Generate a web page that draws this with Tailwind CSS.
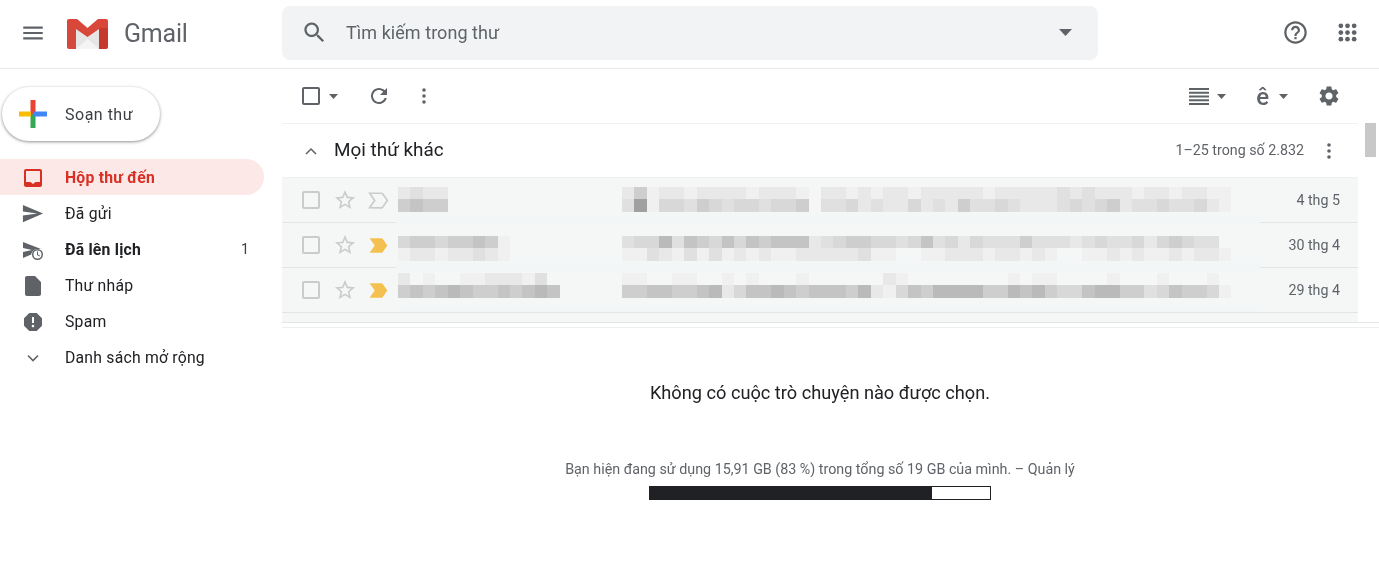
<!DOCTYPE html>
<html lang="vi">
<head>
  <meta charset="UTF-8" />
  <meta name="viewport" content="width=device-width, initial-scale=1.0" />
  <title>Gmail</title>
  <script src="https://cdn.jsdelivr.net/npm/@tailwindcss/browser@4"></script>
</head>
<body class="bg-white font-['Roboto',sans-serif] text-[#202124]">
<div class="relative w-[1379px] h-[581px] overflow-hidden flex flex-col blur-[0.35px]">

  <!-- header -->
  <header class="h-[69px] shrink-0 flex items-center pb-[4px] border-b border-[#e8eaed]">
    <svg class="ml-[20px] mt-[2px] w-[26px] h-[26px] fill-[#5f6368]" viewBox="0 0 24 24"><path d="M3 18h18v-2H3v2zm0-5h18v-2H3v2zm0-7v2h18V6H3z"/></svg>
    <svg class="ml-[21px] mt-[4px] w-[41px] h-[30px]" viewBox="0 0 41 30">
      <path d="M2 0h37a2 2 0 0 1 2 2v26a2 2 0 0 1-2 2H2a2 2 0 0 1-2-2V2a2 2 0 0 1 2-2z" fill="#e6e6e6"/>
      <path d="M9 30 20.500 20 32 30z" fill="#f4f4f4"/>
      <path d="M10 0h21L20.500 9z" fill="#fff"/>
      <path d="M2 0h8l10.500 9L31 0h8a2 2 0 0 1 2 2v8h-9l-11.500 8L9 10H0V2a2 2 0 0 1 2-2z" fill="#d9463a"/>
      <path d="M0 9h9v21H2a2 2 0 0 1-2-2z" fill="#d4493d"/>
      <path d="M32 9h9v19a2 2 0 0 1-2 2h-7z" fill="#c5392e"/>
    </svg>
    <span class="ml-[16px] mt-[4px] w-[158px] text-[25px] tracking-[-0.2px] text-[#5f6368]">Gmail</span>
    <div class="w-[816px] h-[54px] mt-[2px] rounded-lg bg-[#f1f3f4] flex items-center pb-[2px]">
      <svg class="ml-[19px] w-[27px] h-[27px] fill-[#5f6368]" viewBox="0 0 24 24"><path d="M15.500 14h-.79l-.28-.27C15.410 12.590 16 11.110 16 9.500 16 5.910 13.090 3 9.500 3S3 5.910 3 9.500 5.910 16 9.500 16c1.610 0 3.090-.59 4.230-1.570l.27.28v.79l5 4.990L20.490 19l-4.990-5zm-6 0C7.010 14 5 11.990 5 9.500S7.010 5 9.500 5 14 7.010 14 9.500 11.990 14 9.500 14z"/></svg>
      <span class="ml-[18px] text-[18px] tracking-[0.05px] text-[#5f6368] flex-1">Tìm kiếm trong thư</span>
      <svg class="mr-[26px] w-[13px] h-[7px] fill-[#5f6368]" viewBox="0 0 13 7"><path d="M0 0h13L6.500 7z"/></svg>
    </div>
    <svg class="ml-[184px] w-[27px] h-[27px] fill-[#5f6368]" viewBox="0 0 24 24"><path d="M11 18h2v-2h-2v2zm1-16C6.480 2 2 6.480 2 12s4.480 10 10 10 10-4.480 10-10S17.520 2 12 2zm0 18c-4.410 0-8-3.590-8-8s3.590-8 8-8 8 3.590 8 8-3.590 8-8 8zm0-14c-2.210 0-4 1.790-4 4h2c0-1.100.9-2 2-2s2 .9 2 2c0 2-3 1.750-3 5h2c0-2.250 3-2.500 3-5 0-2.210-1.790-4-4-4z"/></svg>
    <svg class="ml-[29px] w-[19px] h-[19px] fill-[#5f6368]" viewBox="0 0 20 20">
      <circle cx="3" cy="3" r="2.500"/><circle cx="10" cy="3" r="2.500"/><circle cx="17" cy="3" r="2.500"/>
      <circle cx="3" cy="10" r="2.500"/><circle cx="10" cy="10" r="2.500"/><circle cx="17" cy="10" r="2.500"/>
      <circle cx="3" cy="17" r="2.500"/><circle cx="10" cy="17" r="2.500"/><circle cx="17" cy="17" r="2.500"/>
    </svg>
  </header>

  <div class="flex flex-1 min-h-0">
    <!-- sidebar -->
    <aside class="w-[282px] shrink-0 pt-[18px]">
      <button class="ml-[2px] w-[158px] h-[54px] rounded-full bg-white flex items-center shadow-[0_1px_3px_1px_rgba(60,64,67,0.22),0_1px_2px_rgba(60,64,67,0.3)]">
        <svg class="ml-[17px] w-[28px] h-[28px]" viewBox="0 0 28 28">
          <rect x="11.500" y="0" width="5" height="14" fill="#ea4335"/>
          <rect x="11.500" y="14" width="5" height="14" fill="#34a853"/>
          <rect x="0" y="11.500" width="12" height="5" fill="#fbbc04"/>
          <rect x="14" y="11.500" width="14" height="5" fill="#4285f4"/>
        </svg>
        <span class="ml-[18px] pt-[2px] text-[16px] tracking-[0.5px] text-[#3c4043]">Soạn thư</span>
      </button>
      <nav class="mt-[18px] text-[15.750px] tracking-[0.22px] text-[#202124]">
        <a class="w-[264px] h-[36px] pt-[1px] rounded-r-full bg-[#fce8e6] flex items-center font-bold text-[#d93025]">
          <svg class="ml-[21px] w-[24px] h-[24px] fill-[#d93025]" viewBox="0 0 24 24"><path fill-rule="evenodd" d="M5 3h14a2 2 0 0 1 2 2v14a2 2 0 0 1-2 2H5a2 2 0 0 1-2-2V5a2 2 0 0 1 2-2zm0 2v11h4.500l2.500 2 2.500-2H19V5z"/></svg>
          <span class="ml-[20px]">Hộp thư đến</span>
        </a>
        <a class="w-[264px] h-[36px] pt-[1px] flex items-center">
          <svg class="ml-[21px] w-[23px] h-[23px] fill-[#5f6368]" viewBox="0 0 24 24"><path d="M2.010 21L23 12 2.010 3 2 10l15 2-15 2z"/></svg>
          <span class="ml-[21px]">Đã gửi</span>
        </a>
        <a class="w-[264px] h-[36px] pt-[1px] flex items-center font-bold">
          <svg class="ml-[21px] w-[24px] h-[24px] fill-[#5f6368]" viewBox="0 0 24 24">
            <path d="M2 20V14l9-2-9-2V4l18 7h-4a6 6 0 0 0-5.800 5.500z"/>
            <circle cx="16.500" cy="16.500" r="5.500" fill="#5f6368"/>
            <circle cx="16.500" cy="16.500" r="4" fill="#fff"/>
            <path d="M16 13.500h1v3l2.200 1.300-.5.8-2.700-1.600z"/>
          </svg>
          <span class="ml-[20px] flex-1">Đã lên lịch</span>
          <span class="mr-[15px] text-[14.250px] tracking-normal font-normal text-[#3c4043]">1</span>
        </a>
        <a class="w-[264px] h-[36px] pt-[1px] flex items-center">
          <svg class="ml-[21px] w-[24px] h-[24px] fill-[#5f6368]" viewBox="0 0 24 24"><path d="M14 2H6c-1.100 0-1.990.9-1.990 2L4 20c0 1.100.89 2 1.990 2H18c1.100 0 2-.9 2-2V8l-6-6z"/></svg>
          <span class="ml-[20px]">Thư nháp</span>
        </a>
        <a class="w-[264px] h-[36px] pt-[1px] flex items-center">
          <svg class="ml-[21px] w-[24px] h-[24px] fill-[#5f6368]" viewBox="0 0 24 24"><path d="M15.730 3H8.270L3 8.270v7.460L8.270 21h7.460L21 15.730V8.270L15.730 3zM12 17.300c-.72 0-1.300-.58-1.300-1.300 0-.72.58-1.300 1.300-1.300.72 0 1.300.58 1.300 1.300 0 .72-.58 1.300-1.300 1.300zm1-4.300h-2V7h2v6z"/></svg>
          <span class="ml-[20px]">Spam</span>
        </a>
        <a class="w-[264px] h-[36px] pt-[2px] flex items-center">
          <svg class="ml-[26px] w-[14px] h-[9px] stroke-[#5f6368] fill-none" viewBox="0 0 14 9" stroke-width="1.600"><path d="M2 1.500l5 5 5-5"/></svg>
          <span class="ml-[25px]">Danh sách mở rộng</span>
        </a>
      </nav>
    </aside>

    <!-- main -->
    <main class="flex-1 min-w-0 flex flex-col">
      <div class="w-[1076px]">
        <!-- toolbar -->
        <div class="h-[55px] flex items-center border-b border-[#eef0f1]">
          <span class="ml-[20px] w-[18px] h-[18px] rounded-[2px] border-[2px] border-[#5f6368]"></span>
          <svg class="ml-[9px] w-[9px] h-[5px] fill-[#5f6368]" viewBox="0 0 9 5"><path d="M0 0h9L4.500 5z"/></svg>
          <svg class="ml-[29px] w-[24px] h-[24px] fill-[#5f6368]" viewBox="0 0 24 24"><path d="M17.650 6.350C16.200 4.900 14.210 4 12 4c-4.420 0-7.990 3.580-7.990 8s3.570 8 7.990 8c3.730 0 6.840-2.550 7.730-6h-2.080c-.82 2.330-3.040 4-5.650 4-3.310 0-6-2.690-6-6s2.690-6 6-6c1.660 0 3.140.69 4.220 1.780L13 11h7V4l-2.350 2.350z"/></svg>
          <svg class="ml-[31px] w-[4px] h-[16px] fill-[#5f6368]" viewBox="0 0 4 16"><circle cx="2" cy="2" r="1.800"/><circle cx="2" cy="8" r="1.800"/><circle cx="2" cy="14" r="1.800"/></svg>
          <svg class="ml-auto w-[20px] h-[17px] fill-[#5f6368]" viewBox="0 0 20 17"><rect width="20" height="2"/><rect y="3.750" width="20" height="2"/><rect y="7.500" width="20" height="2"/><rect y="11.250" width="20" height="2"/><rect y="15" width="20" height="2"/></svg>
          <svg class="ml-[8px] w-[9px] h-[5px] fill-[#5f6368]" viewBox="0 0 9 5"><path d="M0 0h9L4.500 5z"/></svg>
          <span class="ml-[30px] pt-[2px] text-[24px] leading-none font-medium text-[#5f6368]">ê</span>
          <svg class="ml-[10px] w-[9px] h-[5px] fill-[#5f6368]" viewBox="0 0 9 5"><path d="M0 0h9L4.500 5z"/></svg>
          <svg class="ml-[29px] mr-[17px] w-[24px] h-[24px] fill-[#5f6368]" viewBox="0 0 24 24"><path d="M19.140 12.940c.04-.3.06-.61.06-.94 0-.32-.02-.64-.07-.94l2.030-1.580c.18-.14.23-.41.12-.61l-1.920-3.320c-.12-.22-.37-.29-.59-.22l-2.390.96c-.5-.38-1.030-.7-1.620-.94l-.36-2.540c-.04-.24-.24-.41-.48-.41h-3.840c-.24 0-.43.17-.47.41l-.36 2.540c-.59.24-1.130.57-1.620.94l-2.390-.96c-.22-.08-.47 0-.59.22L2.740 8.870c-.12.21-.08.47.12.61l2.030 1.580c-.05.3-.09.63-.09.94s.02.64.07.94l-2.030 1.580c-.18.14-.23.41-.12.61l1.920 3.320c.12.22.37.29.59.22l2.390-.96c.5.38 1.030.7 1.620.94l.36 2.540c.05.24.24.41.48.41h3.840c.24 0 .44-.17.47-.41l.36-2.540c.59-.24 1.130-.56 1.620-.94l2.390.96c.22.08.47 0 .59-.22l1.920-3.320c.12-.22.07-.47-.12-.61l-2.010-1.580zM12 15.600c-1.980 0-3.600-1.620-3.600-3.600s1.620-3.600 3.600-3.600 3.600 1.620 3.600 3.600-1.620 3.600-3.600 3.600z"/></svg>
        </div>
        <!-- section header -->
        <div class="h-[54px] flex items-center border-b border-[#eef0f1]">
          <svg class="ml-[23px] w-[12px] h-[8px] stroke-[#5f6368] fill-none" viewBox="0 0 12 8" stroke-width="1.500"><path d="M1 7l5-5 5 5"/></svg>
          <span class="ml-[17px] text-[18.900px] text-[#202124] flex-1">Mọi thứ khác</span>
          <span class="text-[14.250px] text-[#5f6368]">1–25 trong số 2.832</span>
          <svg class="ml-[23px] mr-[27px] w-[4px] h-[16px] fill-[#5f6368]" viewBox="0 0 4 16"><circle cx="2" cy="2" r="1.800"/><circle cx="2" cy="8" r="1.800"/><circle cx="2" cy="14" r="1.800"/></svg>
        </div>
        <!-- rows filled by script -->
        <div id="rows" class="bg-[#f5f7f7] h-[144px]"></div>
      </div>
      <div class="h-[6px] shrink-0 border-t border-b border-t-[#e3e5e6] border-b-[#eceeef]"></div>

      <!-- empty reading pane -->
      <div class="flex flex-col items-center w-[1076px]">
        <p class="mt-[53px] text-[18.200px] leading-[24px] text-[#202124]">Không có cuộc trò chuyện nào được chọn.</p>
        <p class="mt-[54px] text-[14.300px] leading-[20px] text-[#5f6368]">Bạn hiện đang sử dụng 15,91 GB (83 %) trong tổng số 19 GB của mình. – Quản lý</p>
        <div class="mt-[7px] w-[342px] h-[14px] border border-[#202124] bg-white">
          <div class="h-full w-[83%] bg-[#202124]"></div>
        </div>
      </div>
    </main>
  </div>

  <!-- scrollbar thumb over the list -->
  <div class="absolute left-[1365px] top-[123px] w-[11px] h-[34px] bg-[#c8c8c8]"></div>
</div>

<script>
  // blurred message rows: digits are how dark each block is
  const shades = [0, 240, 232, 224, 216, 206, 196, 186, 176, 160];
  const rows = [
    { top: 'pt-[9px]', star: 'outline', date: '4 thg 5',
      sender: ['2322', '5655'],
      subject: [
        '2512212222122210221212212222212222232322212212211',
        '3914435434434450334232242325334322234345233433421'
      ] },
    { top: 'pt-[13px]', star: 'filled', date: '30 thg 4',
      sender: ['455455651', '122122321'],
      subject: [
        '3447365464656662345544346342433353332343342454330',
        '1132131312121122222311001122212212100112121121221'
      ] },
    { top: 'pt-[5px]', star: 'filled', date: '29 thg 4',
      sender: ['2010011222130', '5656765565676'],
      subject: [
        '1100110010100010000002100000000101100001000100010',
        '5566556724667656665721465777755767544677553465541'
      ] }
  ];

  function blockLines(lines) {
    return lines.map(line => {
      const cells = [...line].map(c => {
        const gray = shades[Number(c)];
        const bg = c === '0' ? 'transparent' : `rgb(${gray},${gray},${gray + 1})`;
        return `<span class="block w-[12.450px] h-[12.400px] shrink-0" style="background:${bg}"></span>`;
      }).join('');
      return `<div class="flex">${cells}</div>`;
    }).join('');
  }

  const chevron = 'M3.500 18.990l11 .01c.67 0 1.270-.33 1.630-.84L20.500 12l-4.370-6.160c-.36-.51-.96-.84-1.630-.84l-11 .01L8.340 12 3.500 18.990z';
  const starPath = 'M22 9.240l-7.190-.62L12 2 9.190 8.630 2 9.240l5.460 4.730L5.820 21 12 17.270 18.180 21l-1.630-7.030L22 9.240zM12 15.400l-3.760 2.270 1-4.280-3.320-2.880 4.380-.38L12 6.100l1.710 4.040 4.380.38-3.320 2.880 1 4.280L12 15.400z';

  document.getElementById('rows').innerHTML = rows.map((r, i) => {
    const marker = r.star === 'filled'
      ? `<path d="${chevron}" fill="#f4c150"/>`
      : `<path d="${chevron}" fill="none" stroke="#c9cbcc" stroke-width="1.600"/>`;
    const last = i === rows.length - 1;
    return `<div class="h-[45px] flex overflow-hidden">
      <div class="w-[114px] shrink-0 flex items-center border-b border-[#e3e5e8]">
        <span class="ml-[20px] w-[18px] h-[18px] rounded-[2px] border-[2px] border-[#c9cbcc]"></span>
        <svg class="ml-[13px] w-[24px] h-[24px] fill-[#c9cbcc]" viewBox="0 0 24 24"><path d="${starPath}"/></svg>
        <svg class="ml-[9px] w-[25px] h-[25px]" viewBox="0 0 24 24">${marker}</svg>
      </div>
      <div class="flex-1 min-w-0 flex pl-[2px] ${r.top} bg-gradient-to-b from-[#f5f7f7] from-[70%] to-[#f3f6f7] ${last ? 'border-b border-[#e3e5e8]' : ''}">
        <div class="w-[224px] shrink-0">${blockLines(r.sender)}</div>
        <div class="shrink-0">${blockLines(r.subject)}</div>
      </div>
      <div class="w-[98px] shrink-0 flex items-center justify-end pt-[2px] pr-[18px] text-[14.250px] text-[#5f6368] border-b border-[#e3e5e8]">${r.date}</div>
    </div>`;
  }).join('');
</script>
</body>
</html>
